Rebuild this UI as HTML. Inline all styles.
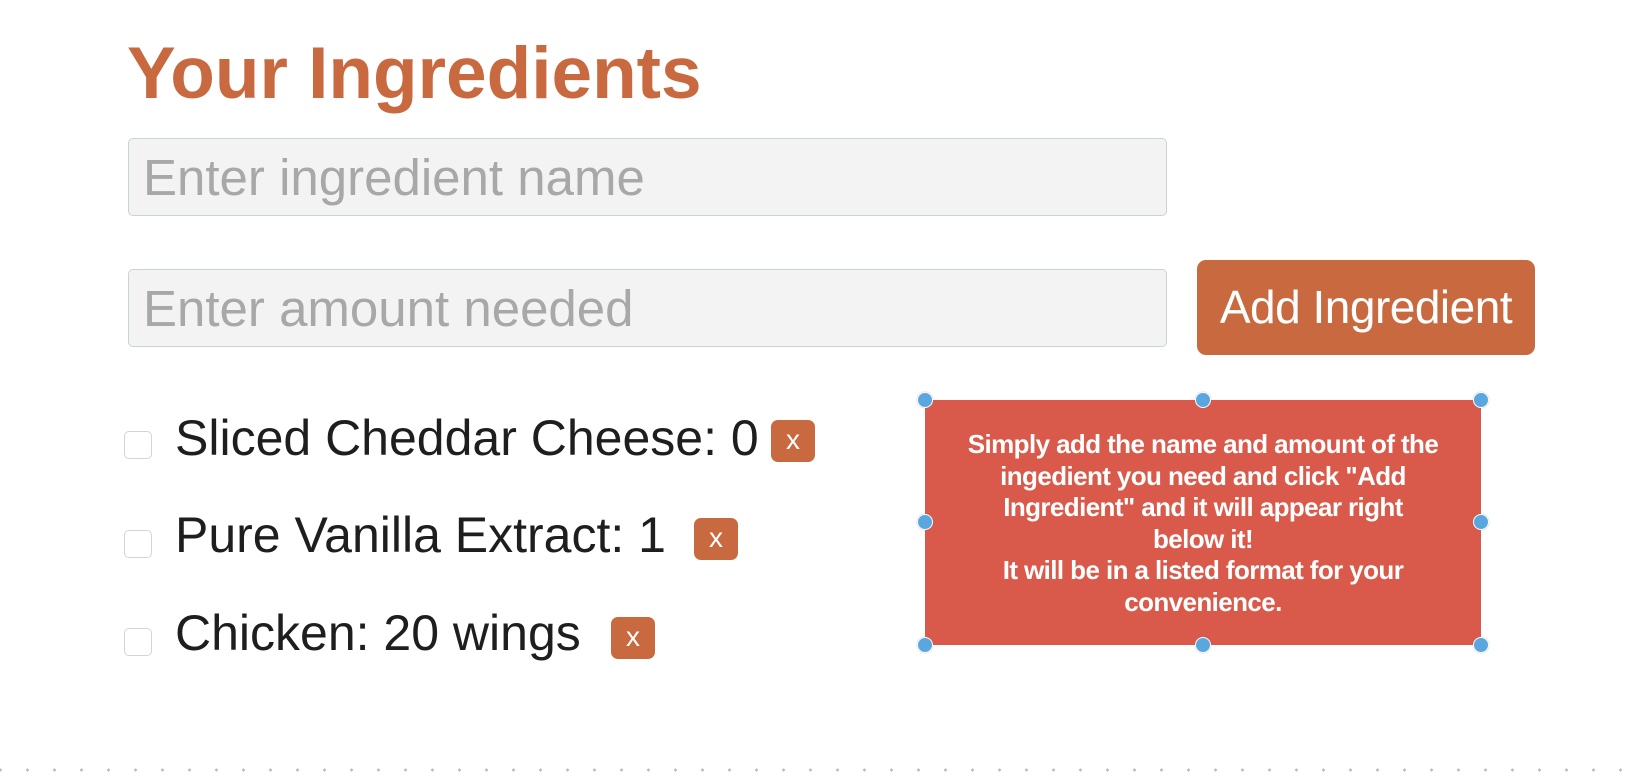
<!DOCTYPE html>
<html><head><meta charset="utf-8"><style>
html,body{margin:0;padding:0}
body{width:1630px;height:780px;position:relative;overflow:hidden;background:#fff;font-family:"Liberation Sans",sans-serif}
.a{position:absolute}
h1{position:absolute;left:127px;top:32px;margin:0;font-size:73px;font-weight:bold;color:#c8693f;line-height:84px}
.inp{position:absolute;left:128px;width:1039px;height:78px;background:#f3f3f3;border:1.5px solid #c6d5d0;border-radius:5px;box-sizing:border-box;color:#a8a8a8;font-size:51px;line-height:78px;padding-left:14px}
.btn{left:1197px;top:260px;width:338px;height:95px;background:#c8693f;border-radius:9px;color:#fff;font-size:46px;line-height:95px;text-align:center;letter-spacing:-0.5px}
.cb{width:28px;height:28px;border:1.5px solid #d4d4d4;border-radius:5px;box-sizing:border-box;background:#fff;left:124px}
.it{left:175px;font-size:50px;color:#1e1e1e;line-height:60px}
.x{width:44px;height:42px;background:#c8693f;border-radius:7px;color:#fff;font-size:28px;line-height:40px;text-align:center}
.box{left:925px;top:400px;width:556px;height:245px;background:#d9594a;color:#fff;font-weight:bold;font-size:26px;line-height:31.5px;text-align:center;box-sizing:border-box;padding-top:29px;letter-spacing:-0.6px}
.h{width:14px;height:14px;border-radius:50%;background:#5aa7e0;border:1.5px solid #fff;box-shadow:0 0 1px #888}
.dots{left:0;top:768px;width:1630px;height:4px;background:radial-gradient(circle,#bdbdbd 1.3px,transparent 1.6px) 14px 0/27px 4px repeat-x}
</style></head><body>
<h1>Your Ingredients</h1>
<div class="inp" style="top:138px">Enter ingredient name</div>
<div class="inp" style="top:269px">Enter amount needed</div>
<div class="a btn">Add Ingredient</div>

<div class="a cb" style="top:431px"></div>
<div class="a it" style="top:408px">Sliced Cheddar Cheese: 0</div>
<div class="a x" style="left:771px;top:420px">x</div>

<div class="a cb" style="top:530px"></div>
<div class="a it" style="top:505px">Pure Vanilla Extract: 1</div>
<div class="a x" style="left:694px;top:518px">x</div>

<div class="a cb" style="top:628px"></div>
<div class="a it" style="top:603px">Chicken: 20 wings</div>
<div class="a x" style="left:611px;top:617px">x</div>

<div class="a box">Simply add the name and amount of the<br>ingedient you need and click "Add<br>Ingredient" and it will appear right<br>below it!<br>It will be in a listed format for your<br>convenience.</div>
<div class="a h" style="left:917px;top:392px"></div>
<div class="a h" style="left:1195px;top:392px"></div>
<div class="a h" style="left:1473px;top:392px"></div>
<div class="a h" style="left:917px;top:514px"></div>
<div class="a h" style="left:1473px;top:514px"></div>
<div class="a h" style="left:917px;top:637px"></div>
<div class="a h" style="left:1195px;top:637px"></div>
<div class="a h" style="left:1473px;top:637px"></div>

<div class="a dots"></div>
</body></html>
